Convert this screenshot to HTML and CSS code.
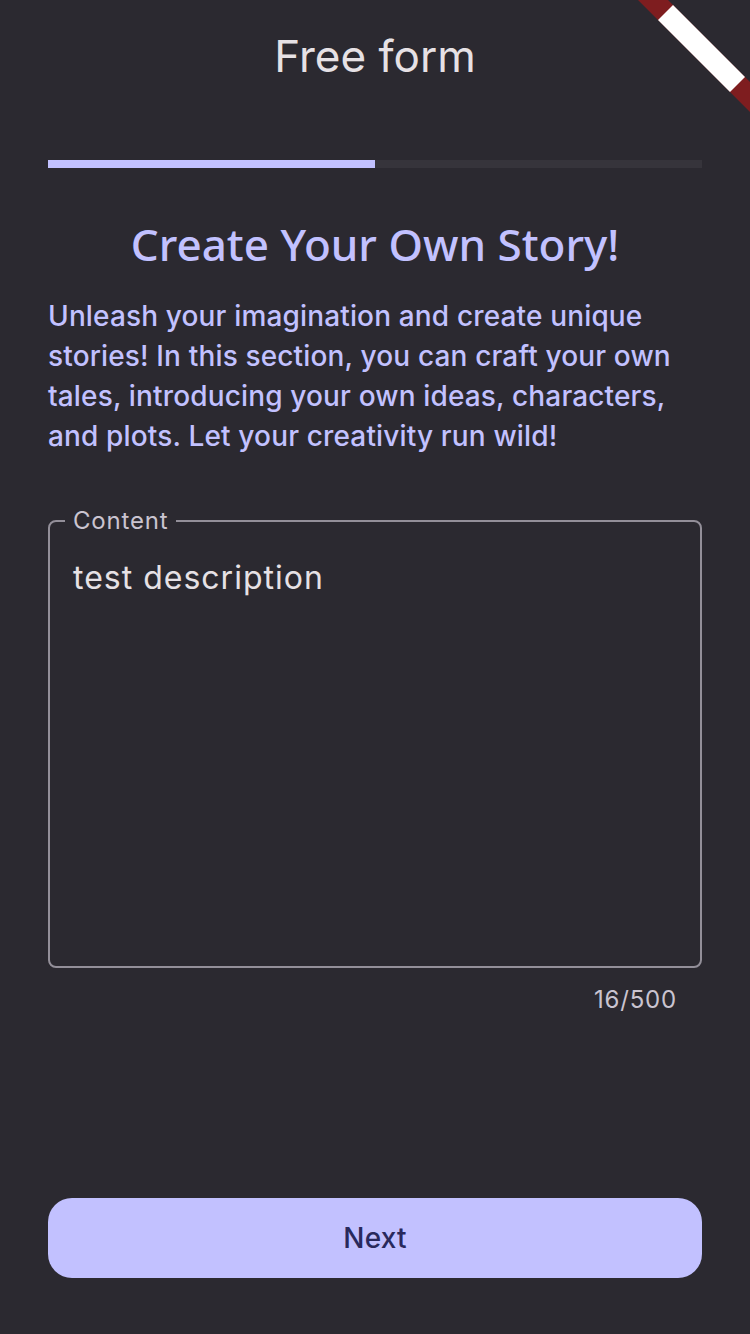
FILE: index.html
```html
<!DOCTYPE html>
<html lang="en">
<head>
<meta charset="utf-8">
<title>Free form</title>
<link rel="stylesheet" href="styles.css">
</head>
<body>
<div class="screen">
  <header class="appbar">
    <h1 class="appbar-title">Free form</h1>
  </header>
  <main class="content">
    <div class="progress"><div class="progress-fill" style="width: 50%"></div></div>
    <h2 class="story-title">Create Your Own Story!</h2>
    <p class="story-desc">Unleash your imagination and create unique stories! In this section, you can craft your own tales, introducing your own ideas, characters, and plots. Let your creativity run wild!</p>
    <fieldset class="field">
      <legend class="field-label">Content</legend>
      <div class="field-value">test description</div>
    </fieldset>
    <div class="counter">16/500</div>
    <button class="next-btn" type="button">Next</button>
  </main>
  <svg class="debug-banner" width="120" height="120" viewBox="0 0 120 120" aria-hidden="true">
    <polygon points="8,0 38,0 120,82 120,112" fill="#7e1d1f"/>
    <polygon points="28,20 43,5 115,77 100,92" fill="#ffffff"/>
  </svg>
</div>
</body>
</html>
```
FILE: styles.css
```css
* { box-sizing: border-box; }
html, body { margin: 0; padding: 0; }
body {
  background: #2b2930;
  font-family: Inter, "Noto Sans", sans-serif;
  color: #e6e1e5;
}
.screen {
  position: relative;
  width: 750px;
  height: 1334px;
  overflow: hidden;
  display: flex;
  flex-direction: column;
}
.appbar {
  height: 112px;
  display: flex;
  align-items: center;
  justify-content: center;
  flex: none;
}
.appbar-title {
  margin: 0;
  font-size: 44px;
  font-weight: 400;
  line-height: 56px;
  color: #e6e1e5;
}
.content {
  flex: 1;
  display: flex;
  flex-direction: column;
  padding: 48px 48px 56px;
}
.progress {
  height: 8px;
  background: #36343b;
  flex: none;
}
.progress-fill {
  height: 100%;
  background: #c2c1ff;
}
.story-title {
  margin: 48px 0 0;
  text-align: center;
  font-family: "Noto Sans", sans-serif;
  font-weight: 500;
  font-size: 44px;
  line-height: 56px;
  color: #c2c1ff;
}
.story-desc {
  margin: 24px 0 0;
  font-size: 28px;
  font-weight: 500;
  line-height: 40px;
  letter-spacing: 0.15px;
  color: #c2c1ff;
}
.field {
  margin: 53px 0 0;
  padding: 0;
  border: 2px solid #938f99;
  border-radius: 8px;
  height: 459px;
  min-width: 0;
}
.field-label {
  margin-left: 15px;
  padding: 0 8px;
  font-size: 24px;
  line-height: 24px;
  letter-spacing: 0.8px;
  color: #cac4d0;
}
.field-value {
  padding: 21px 23px 0;
  font-size: 32px;
  line-height: 48px;
  letter-spacing: 1px;
  color: #e6e1e5;
}
.counter {
  margin-top: 16px;
  padding-right: 25px;
  text-align: right;
  font-size: 24px;
  line-height: 32px;
  color: #cac4d0;
  letter-spacing: 0.8px;
}
.next-btn {
  margin-top: auto;
  height: 80px;
  border: none;
  border-radius: 24px;
  background: #c2c1ff;
  color: #29295c;
  font-family: Inter, "Noto Sans", sans-serif;
  font-size: 28px;
  font-weight: 500;
  letter-spacing: 0.2px;
}
.debug-banner {
  position: absolute;
  top: 0;
  right: 0;
}
```
